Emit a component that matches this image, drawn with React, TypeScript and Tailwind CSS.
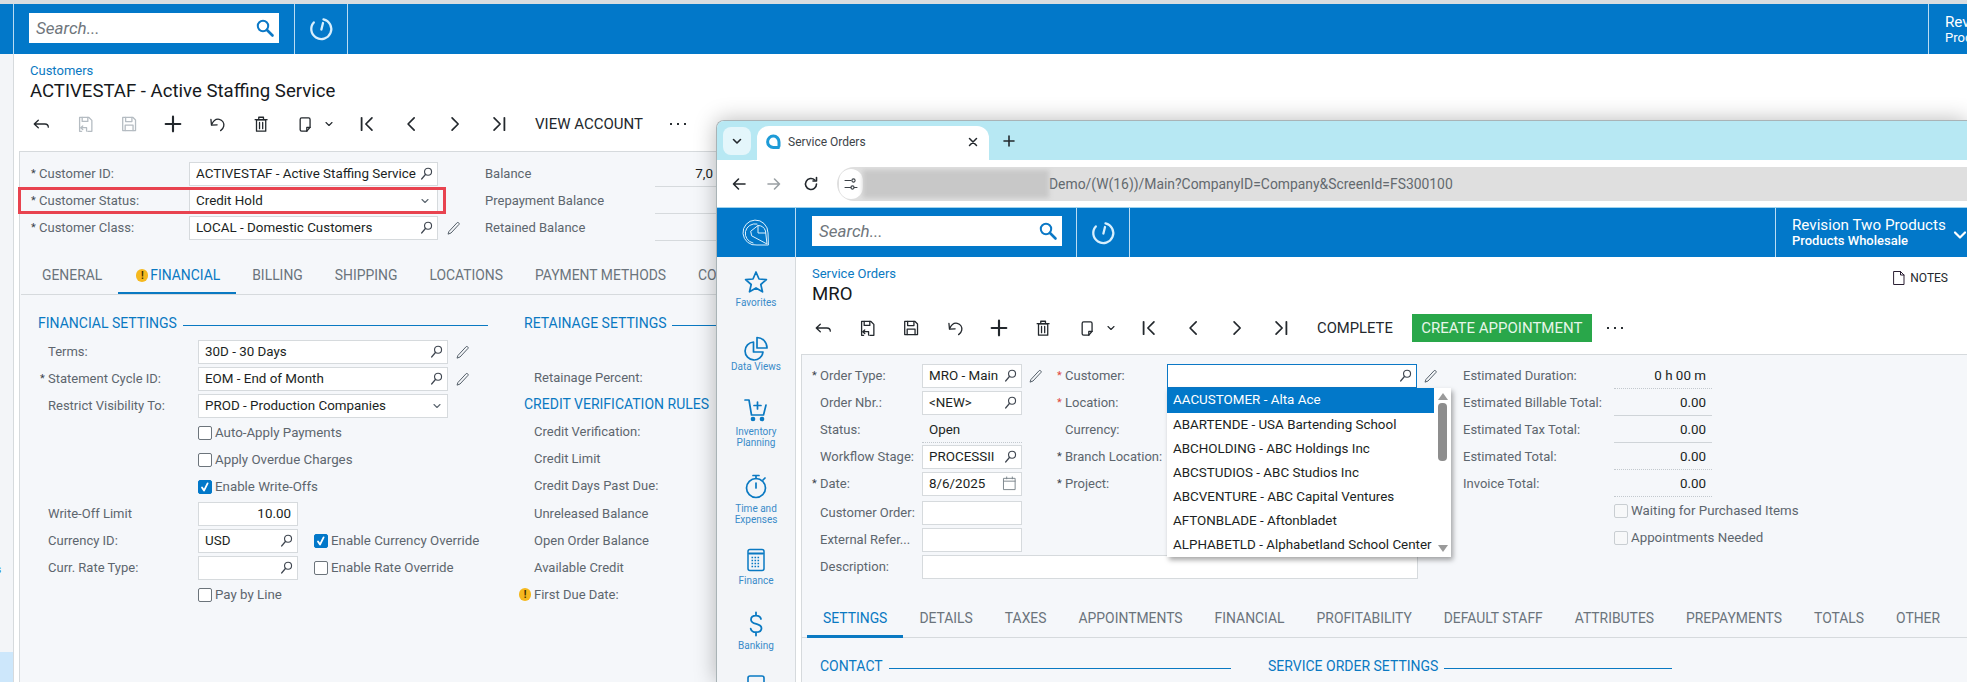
import React from "react";

type C = { children?: React.ReactNode };
const S = ({ w = 16, h = 16, vb = "0 0 16 16", sw = 1.2, color = "currentColor", children, className = "" }: { w?: number; h?: number; vb?: string; sw?: number; color?: string; className?: string } & C) => (
  <svg width={w} height={h} viewBox={vb} fill="none" stroke={color} strokeWidth={sw} strokeLinecap="round" strokeLinejoin="round" className={className}>{children}</svg>
);

const Lens = () => (
  <S w={14} h={14} sw={1.3} color="#3f4650" className="shrink-0"><circle cx="9.2" cy="5.4" r="4" /><path d="M6.3 8.4 2 13.6" strokeWidth="1.7" /></S>
);
const Pencil = () => (
  <S w={16} h={16} sw={1} color="#55606a" className="shrink-0"><path d="M3.2 11.2 11.2 2.6c.8-.7 2.6.8 1.9 1.7L5 13l-2.6 1z" /></S>
);
const Chevron = ({ color = "#5c6670" }: { color?: string }) => (
  <S w={10} h={10} vb="0 0 10 10" sw={1.1} color={color} className="shrink-0"><path d="M2 3.5 5 6.5 8 3.5" /></S>
);
const HeadLens = () => (
  <S w={20} h={20} vb="0 0 20 20" sw={2} color="#0b78c6"><circle cx="8" cy="8" r="5.2" /><path d="m12 12 5.5 5.5" strokeWidth="2.6" /></S>
);
const Timer = () => (
  <S w={28} h={28} vb="0 0 28 28" sw={2.3} color="#d8effd"><path d="M16.5 4.300A10 10 0 1 1 6.800 7.400" /><path d="M14.400 14.500 16 8" /></S>
);
const ToolIcon = ({ name, dim = false, color }: { name: string; dim?: boolean; color?: string }) => {
  const c = color ?? (dim ? "#b5bcc2" : "#23282d");
  const p: Record<string, React.ReactNode> = {
    back: <path d="M2 8h9.5c1.8 0 3 1.1 3 2.8M2 8l3.6-3.4M2 8l3.6 3.4" />,
    saveback: <><path d="M5 14.5H3.2V2.2h8.3l2.6 2.6v9.7h-3.6" /><path d="M5.5 2.2v3.5h5V2.2" /><path d="M4.2 11.3h5.2v3M4.2 11.3l1.8-1.6M4.2 11.3 6 12.9" /></>,
    save: <><path d="M2.4 2.2h9.2l2.2 2.2v9.4H2.4z" /><path d="M5 2.2v3.6h5.6V2.2M4.6 13.8V9h7v4.8" /></>,
    undo: <><path d="M3.300 8.500C4.800 5 7.500 3.300 10 3.800c2.800.6 4.600 3.200 4 6.100-.3 1.700-1.400 3-2.800 4" /><path d="M2.600 3.800 3.100 9l5-.3" /></>,
    plus: <path d="M8 1.5v13M1.5 8h13" strokeWidth={1.9} />,
    trash: <><path d="M4 4.4h8.2v10H4z" /><path d="M2.8 4.2h10.6M6 4V2h4.2v2M6.7 6.6v5.6M9.5 6.6v5.6" /></>,
    paste: <><path d="M5 2.6h6.2c.8 0 1.3.6 1.3 1.3v7L9.6 14.4H5c-.8 0-1.3-.6-1.3-1.3V3.9c0-.7.5-1.3 1.3-1.3z" /><path d="M9.6 14.4V11h2.9" /></>,
    first: <><path d="M3.2 2.5v11" strokeWidth={1.6} /><path d="M12.4 2.5 7 8l5.4 5.5" strokeWidth={1.5} /></>,
    prev: <path d="M10.8 2.5 5.4 8l5.4 5.5" strokeWidth={1.5} />,
    next: <path d="M5.4 2.5 10.8 8l-5.4 5.5" strokeWidth={1.5} />,
    last: <><path d="M12.8 2.5v11" strokeWidth={1.6} /><path d="M3.6 2.5 9 8l-5.4 5.5" strokeWidth={1.5} /></>,
  };
  return <S w={18} h={18} color={c} sw={1.15}>{p[name]}</S>;
};
const Tool = ({ name, dim }: { name: string; dim?: boolean }) => (
  <div className="w-[44px] h-full flex items-center justify-center shrink-0"><ToolIcon name={name} dim={dim} /></div>
);
const Dots = () => (
  <div className="flex gap-[5px] items-center"><i className="w-[2px] h-[2px] bg-[#2a2f33] block" /><i className="w-[2px] h-[2px] bg-[#2a2f33] block" /><i className="w-[2px] h-[2px] bg-[#2a2f33] block" /></div>
);
const Toolbar = ({ dim, undoFirst, children }: { dim?: boolean; undoFirst?: boolean } & C) => (
  <div className="flex items-center h-[34px] -ml-[11px]">
    <Tool name="back" />
    <Tool name="saveback" dim={dim} />
    <Tool name="save" dim={dim} />
    <Tool name={undoFirst ? "undo" : "plus"} />
    <Tool name={undoFirst ? "plus" : "undo"} />
    <Tool name="trash" />
    <div className="w-[62px] h-full flex items-center shrink-0">
      <div className="w-[44px] flex justify-center"><ToolIcon name="paste" /></div>
      <div className="w-[18px] flex justify-start -ml-[3px]"><Chevron color="#23282d" /></div>
    </div>
    <Tool name="first" />
    <Tool name="prev" />
    <Tool name="next" />
    <Tool name="last" />
    {children}
  </div>
);

const Star = ({ red }: { red?: boolean }) => (
  <span className={`w-[8px] -ml-px shrink-0 text-[11px] leading-none ${red ? "text-[#e0483e]" : "text-[#39424a]"}`}>*</span>
);
const Warn = () => (
  <span className="w-[12px] h-[13px] rounded-full bg-[#f5b81e] text-[#3a2c00] text-[10px] leading-[13px] font-bold text-center block">!</span>
);
const Label = ({ w, star, red, warn, children }: { w: string; star?: boolean; red?: boolean; warn?: boolean } & C) => (
  <div className={`${w} shrink-0 flex items-center text-[#5d666e] whitespace-nowrap`}>
    {warn ? <span className="w-[15px] -ml-[8px] flex shrink-0"><Warn /></span> : star ? <Star red={red} /> : <span className="w-[7px] shrink-0" />}
    <span>{children}</span>
  </div>
);
const Box = ({ w, value, icon, right, focus }: { w: string; value?: string; icon?: React.ReactNode; right?: boolean; focus?: boolean }) => (
  <div className={`${w} h-[24px] shrink-0 bg-white border ${focus ? "border-[#0b78c6]" : "border-[#d6dadd]"} flex items-center pl-[6px] pr-[3px] text-[#1b1f23] text-[13.4px]`}>
    <span className={`flex-1 whitespace-nowrap overflow-hidden ${right ? "text-right pr-[3px]" : ""}`}>{value}</span>
    {icon}
  </div>
);
const Check = ({ on, soft }: { on?: boolean; soft?: boolean }) => (
  <span className={`w-[14px] h-[14px] shrink-0 rounded-[2px] border flex items-center justify-center ${on ? "bg-[#0278c9] border-[#0278c9]" : soft ? "bg-[#f7f8f9] border-[#c9ced2]" : "bg-white border-[#6c747b]"}`}>
    {on ? <S w={12} h={12} vb="0 0 12 12" sw={1.8} color="#fff"><path d="M3 6.4 5 9.6 8.6 2.4" /></S> : null}
  </span>
);
const CheckLabel = ({ on, soft, children }: { on?: boolean; soft?: boolean } & C) => (
  <div className="flex items-center gap-[3px] text-[#5d666e] whitespace-nowrap text-[13.3px]"><Check on={on} soft={soft} /><span>{children}</span></div>
);
const Row = ({ children, className = "" }: { className?: string } & C) => (
  <div className={`h-[27px] flex items-center ${className}`}>{children}</div>
);
const Section = ({ title, line }: { title: string; line: string }) => (
  <div className="h-[16px] flex items-center gap-[6px] whitespace-nowrap">
    <span className="text-[#0a79c2] text-[14px] leading-none">{title}</span>
    <span className={`${line} h-px bg-[#0a79c2] mt-[5px] shrink-0`} />
  </div>
);
const Tab = ({ label, active, warn }: { label: string; active?: boolean; warn?: boolean }) => (
  <div className={`h-[37px] shrink-0 flex items-center gap-[2px] pr-4 whitespace-nowrap text-[13.9px] border-b-[3px] ${warn ? "pl-[18px]" : "pl-4"} ${active ? "text-[#0a79c2] border-[#0a79c2]" : "text-[#6b747c] border-transparent"}`}>
    {warn ? <Warn /> : null}
    {label}
  </div>
);

const Search = () => (
  <div className="w-[250px] h-[30px] bg-white flex items-center pl-[7px] pr-[4px]">
    <span className="flex-1 text-[#6f767c] italic text-[17px]">Search...</span>
    <HeadLens />
  </div>
);

const BackPage = () => (
  <div className="h-[682px] flex flex-col bg-white">
    <div className="h-[4px] bg-[#d9dde0] shrink-0" />
    <div className="h-[50px] bg-[#0278c9] flex shrink-0 text-white">
      <div className="w-[14px] border-r border-[#b9dcf3]" />
      <div className="w-[281px] pl-[15px] flex items-start pt-[9px] border-r border-[#b9dcf3]"><Search /></div>
      <div className="w-[53px] flex items-center justify-center border-r border-[#b9dcf3]"><Timer /></div>
      <div className="flex-1 border-r border-[#b9dcf3]" />
      <div className="w-[38px] pl-[16px] overflow-hidden whitespace-nowrap">
        <div className="text-[15.200px] leading-[16px] mt-[10px]">Revision Two Products</div>
        <div className="text-[13px] leading-[15px]">Products Wholesale</div>
      </div>
    </div>
    <div className="flex-1 flex min-h-0">
      <div className="w-[14px] bg-[#f3f5f8] border-r border-[#d6dadd] flex flex-col shrink-0 overflow-hidden">
        <span className="text-[10px] leading-[12px] text-[#0a79c2] -ml-[4px] mt-[510px]">s</span>
        <div className="mt-auto h-[30px] bg-[#cde7fb]" />
      </div>
      <div className="flex-1 flex flex-col min-w-0">
        <div className="pl-[16px] pt-[9px] pb-[10px] shrink-0">
          <div className="text-[13px] leading-[16px] text-[#0a79c2]">Customers</div>
          <div className="text-[18.600px] leading-[22px] mt-px text-[#16191c] whitespace-nowrap">ACTIVESTAF - Active Staffing Service</div>
          <div className="mt-[5px]">
            <Toolbar dim>
              <span className="pl-[14px] text-[15px] text-[#23282d] whitespace-nowrap">VIEW ACCOUNT</span>
              <span className="pl-[27px]"><Dots /></span>
            </Toolbar>
          </div>
        </div>
        <div className="flex-1 ml-[5px] bg-[#f5f7fa] border-l border-t border-[#d6dadd] pl-px">
          <div className="flex pt-[8px] h-[90px]">
            <div className="w-[464px] shrink-0 pl-[11px]">
              <Row><Label w="w-[157px]" star>Customer ID:</Label><Box w="w-[249px]" value="ACTIVESTAF - Active Staffing Service" icon={<Lens />} /></Row>
              <Row className="relative">
                <Label w="w-[157px]" star>Customer Status:</Label>
                <Box w="w-[249px]" value="Credit Hold" icon={<span className="pr-[4px]"><Chevron /></span>} />
                <span className="absolute -left-[14px] top-0 w-[428px] h-[27px] border-[3px] border-[#e8434f]" />
              </Row>
              <Row>
                <Label w="w-[157px]" star>Customer Class:</Label>
                <Box w="w-[249px]" value="LOCAL - Domestic Customers" icon={<Lens />} />
                <span className="pl-[8px]"><Pencil /></span>
              </Row>
            </div>
            <div className="flex-1 whitespace-nowrap text-[#5d666e]">
              {["Balance", "Prepayment Balance", "Retained Balance"].map((t, i) => (
                <Row key={t}>
                  <span className="w-[170px] shrink-0">{t}</span>
                  <span className="w-[120px] h-[24px] border-b border-[#d6dadd] text-right text-[#1b1f23] text-[13.4px] pt-[3px] pr-[62px] mt-[2px]">{i === 0 ? "7,0" : ""}</span>
                </Row>
              ))}
            </div>
          </div>
          <div className="mt-[16px] h-[37px] border-b border-[#d6dadd] flex pl-[5px] overflow-hidden">
            <Tab label="GENERAL" />
            <Tab label="FINANCIAL" active warn />
            <Tab label="BILLING" />
            <Tab label="SHIPPING" />
            <Tab label="LOCATIONS" />
            <Tab label="PAYMENT METHODS" />
            <Tab label="CONTACTS" />
          </div>
          <div className="flex pl-[17px] pt-[20px]">
            <div className="w-[486px] shrink-0">
              <Section title="FINANCIAL SETTINGS" line="w-[305px]" />
              <div className="mt-[7px] pl-[3px]">
                <Row><Label w="w-[157px]">Terms:</Label><Box w="w-[250px]" value="30D - 30 Days" icon={<Lens />} /><span className="pl-[7px]"><Pencil /></span></Row>
                <Row><Label w="w-[157px]" star>Statement Cycle ID:</Label><Box w="w-[250px]" value="EOM - End of Month" icon={<Lens />} /><span className="pl-[7px]"><Pencil /></span></Row>
                <Row><Label w="w-[157px]">Restrict Visibility To:</Label><Box w="w-[250px]" value="PROD - Production Companies" icon={<span className="pr-[2px]"><Chevron /></span>} /></Row>
                <Row className="pl-[157px]"><CheckLabel>Auto-Apply Payments</CheckLabel></Row>
                <Row className="pl-[157px]"><CheckLabel>Apply Overdue Charges</CheckLabel></Row>
                <Row className="pl-[157px]"><CheckLabel on>Enable Write-Offs</CheckLabel></Row>
                <Row><Label w="w-[157px]">Write-Off Limit</Label><Box w="w-[100px]" value="10.00" right /></Row>
                <Row><Label w="w-[157px]">Currency ID:</Label><Box w="w-[100px]" value="USD" icon={<Lens />} /><span className="pl-[16px]"><CheckLabel on>Enable Currency Override</CheckLabel></span></Row>
                <Row><Label w="w-[157px]">Curr. Rate Type:</Label><Box w="w-[100px]" icon={<Lens />} /><span className="pl-[16px]"><CheckLabel>Enable Rate Override</CheckLabel></span></Row>
                <Row className="pl-[157px]"><CheckLabel>Pay by Line</CheckLabel></Row>
              </div>
            </div>
            <div className="flex-1 min-w-0 text-[#5d666e] whitespace-nowrap">
              <Section title="RETAINAGE SETTINGS" line="w-[60px]" />
              <div className="mt-[6px] pl-[3px]">
                <Row />
                <Row><Label w="w-[160px]">Retainage Percent:</Label></Row>
                <div className="h-[27px] -ml-[3px] flex items-center text-[#0a79c2] text-[14px] pb-[2px]">CREDIT VERIFICATION RULES</div>
                <Row><Label w="w-[160px]">Credit Verification:</Label></Row>
                <Row><Label w="w-[160px]">Credit Limit</Label></Row>
                <Row><Label w="w-[160px]">Credit Days Past Due:</Label></Row>
                <div className="mt-px">
                  <Row><Label w="w-[160px]">Unreleased Balance</Label></Row>
                  <Row><Label w="w-[160px]">Open Order Balance</Label></Row>
                  <Row><Label w="w-[160px]">Available Credit</Label></Row>
                  <Row><Label w="w-[160px]" warn>First Due Date:</Label></Row>
                </div>
              </div>
            </div>
          </div>
        </div>
      </div>
    </div>
  </div>
);

const Nav = ({ mt, lmt = "", lines, children }: { mt: string; lmt?: string; lines: string[] } & C) => (
  <div className={`${mt} flex flex-col items-center shrink-0`}>
    <div className="h-[28px] flex items-center justify-center">{children}</div>
    <div className={`${lmt} text-[10px] leading-[11px] text-[#3a8bc9] text-center whitespace-nowrap`}>
      {lines.map((l) => <div key={l}>{l}</div>)}
    </div>
  </div>
);
const B = "#0a79c2";

const Sidebar = () => (
  <div className="w-[79px] shrink-0 bg-[#f3f5f8] border-r border-[#d6dadd] flex flex-col overflow-hidden">
    <Nav mt="mt-[11px]" lmt="mt-px" lines={["Favorites"]}>
      <S w={26} h={26} vb="0 0 26 26" sw={1.7} color={B}><path d="m13 3 3 7 7.4.6-5.6 4.9 1.7 7.3-6.5-3.9-6.5 3.9 1.7-7.3-5.6-4.9L10 10z" /></S>
    </Nav>
    <Nav mt="mt-[26px]" lmt="-mt-px" lines={["Data Views"]}>
      <S w={26} h={26} vb="0 0 26 26" sw={1.7} color={B}><path d="M10.5 7A9 9 0 1 0 20 17h-9.5z" /><path d="M14 2.5V13h10c0-6-4.5-10.5-10-10.5z" /></S>
    </Nav>
    <Nav mt="mt-[24px]" lmt="mt-[2px]" lines={["Inventory", "Planning"]}>
      <S w={26} h={26} vb="0 0 26 26" sw={1.7} color={B}><path d="M2 3h4l2.5 15h12L23 8" /><path d="M14.5 5v7M11 8.5h7" /><circle cx="10" cy="22" r="1.5" fill={B} /><circle cx="19" cy="22" r="1.5" fill={B} /></S>
    </Nav>
    <Nav mt="mt-[24px]" lmt="mt-[3px]" lines={["Time and", "Expenses"]}>
      <S w={26} h={26} vb="0 0 26 26" sw={1.7} color={B}><circle cx="13" cy="15" r="9.5" /><path d="M10 2.5h6M13 2.5v3M20 7l2-2M13 10v5" /></S>
    </Nav>
    <Nav mt="mt-[21px]" lmt="mt-[1px]" lines={["Finance"]}>
      <S w={26} h={26} vb="0 0 26 26" sw={1.5} color={B}>
        <rect x="5" y="2.5" width="16" height="21" rx="2" />
        <path d="M6 6.5h14" strokeWidth="2" />
        <path d="M8.5 10.5h9M8.5 13.5h9M8.5 16.5h9M8.5 19.5h9" strokeWidth="1.6" strokeDasharray="1.6 1.4" strokeLinecap="butt" />
      </S>
    </Nav>
    <Nav mt="mt-[24px]" lmt="mt-[2px]" lines={["Banking"]}>
      <S w={26} h={26} vb="0 0 26 26" sw={1.8} color={B}><path d="M18 8c-.5-2-2.5-3.3-5-3.3-3 0-5 1.6-5 4 0 5.5 10.500 3 10.500 8.500 0 2.500-2.300 4-5.500 4-2.700 0-4.700-1.300-5.300-3.500M13 1.500v3M13 21.500v3" /></S>
    </Nav>
    <div className="mt-[24px] flex justify-center shrink-0">
      <S w={26} h={26} vb="0 0 26 26" sw={1.6} color={B}><rect x="5" y="1" width="16" height="20" rx="2" /></S>
    </div>
  </div>
);

const options = ["AACUSTOMER - Alta Ace", "ABARTENDE - USA Bartending School", "ABCHOLDING - ABC Holdings Inc", "ABCSTUDIOS - ABC Studios Inc", "ABCVENTURE - ABC Capital Ventures", "AFTONBLADE - Aftonbladet", "ALPHABETLD - Alphabetland School Center"];

const Dropdown = () => (
  <div className="absolute left-0 top-[24px] z-10 w-[284px] h-[169px] bg-white shadow-[2px_3px_5px_rgba(0,0,0,0.35)] flex text-[13.400px]">
    <div className="w-[267px]">
      {options.map((o, i) => (
        <div key={o} className={`flex items-center pl-[6px] whitespace-nowrap ${i === 0 ? "bg-[#0278c9] text-white h-[25px]" : "text-[#1b1f23] h-[24px]"}`}>{o}</div>
      ))}
    </div>
    <div className="flex-1 flex flex-col items-center pt-[5px] pb-[5px]">
      <span className="w-0 h-0 border-l-[5px] border-r-[5px] border-b-[7px] border-l-transparent border-r-transparent border-b-[#9a9a9a]" />
      <span className="w-[9px] h-[58px] mt-[3px] rounded-[4px] bg-[#8d8d8d]" />
      <span className="mt-auto w-0 h-0 border-l-[5px] border-r-[5px] border-t-[7px] border-l-transparent border-r-transparent border-t-[#9a9a9a]" />
    </div>
  </div>
);

const Totals = ({ label, value, solid }: { label: string; value: string; solid?: boolean }) => (
  <Row>
    <span className="w-[151px] shrink-0 text-[#5d666e] whitespace-nowrap">{label}</span>
    <span className={`w-[98px] h-[24px] mt-[3px] pt-[3px] pr-[6px] text-right text-[#1b1f23] text-[13.400px] border-b ${solid ? "border-[#cfd4d8]" : "border-dotted border-[#c3c9ce]"}`}>{value}</span>
  </Row>
);

const Browser = () => (
  <div className="absolute left-[716px] top-[120px] right-0 bottom-0 flex flex-col rounded-tl-lg overflow-hidden border-l border-t border-[#a9b3b6] shadow-[0_0_22px_rgba(0,0,0,0.28)] bg-white">
    <div className="h-[39px] shrink-0 bg-[#b7e8f3] flex items-end pl-[6px] pr-[6px]">
      <div className="w-[28px] h-[28px] mb-[5px] bg-[#e4f6fb] rounded-lg flex items-center justify-center">
        <S w={12} h={12} vb="0 0 12 12" sw={1.6} color="#23282d"><path d="M2.500 4.500 6 8l3.500-3.500" /></S>
      </div>
      <div className="ml-[6px] w-[232px] h-[34px] bg-white rounded-t-xl flex items-center pl-[9px] pr-[10px] pb-[3px]">
        <S w={15} h={16} vb="0 0 15 16" sw={3} color="#1e9bd7"><path d="M12.500 13.500 H7.500 A5.700 5.700 0 1 1 13 8 v4" /></S>
        <span className="flex-1 pl-[7px] text-[12px] text-[#3d4348] whitespace-nowrap">Service Orders</span>
        <S w={12} h={12} vb="0 0 12 12" sw={1.5} color="#23282d"><path d="m2.500 2.500 7 7M9.500 2.500l-7 7" /></S>
      </div>
      <div className="ml-[13px] mb-[8px] h-[22px] flex items-center">
        <S w={14} h={14} vb="0 0 14 14" sw={1.6} color="#23282d"><path d="M7 2v10M2 7h10" /></S>
      </div>
    </div>
    <div className="h-[47px] shrink-0 bg-white flex items-center pl-[14px]">
      <S w={16} h={16} sw={1.6} color="#23282d"><path d="M14 8H2.500M7.500 3 2.500 8l5 5" /></S>
      <span className="ml-[19px]"><S w={16} h={16} sw={1.6} color="#9aa0a4"><path d="M2 8h11.500M8.500 3l5 5-5 5" /></S></span>
      <span className="ml-[21px]"><S w={16} h={16} sw={1.6} color="#23282d"><path d="M13.500 8a5.500 5.500 0 1 1-1.700-4" /><path d="M13.500 1.500v3.500H10" /></S></span>
      <div className="ml-[18px] flex-1 h-[34px] bg-[#dfdfdf] rounded-l-full flex items-center pl-[2px] overflow-hidden">
        <span className="w-[24px] h-[30px] bg-white rounded-full flex items-center justify-center shrink-0">
          <S w={14} h={14} vb="0 0 14 14" sw={1.1} color="#3d4348"><path d="M1 3.500h6M1 10.500h6M10 10.500h3" /><circle cx="9.500" cy="3.500" r="1.600" /><circle cx="8.500" cy="10.500" r="1.600" /></S>
        </span>
        <span className="w-[186px] h-[28px] shrink-0 bg-[#c8c8c8] blur-[2px]" />
        <span className="text-[13.900px] text-[#63696e] whitespace-nowrap">Demo/(W(16))/Main?CompanyID=Company&amp;ScreenId=FS300100</span>
      </div>
    </div>
    <div className="h-[50px] shrink-0 bg-[#0278c9] border-t border-[#9fd3ee] flex text-white">
      <div className="w-[79px] flex items-center justify-center border-r border-[#b9dcf3]">
        <S w={28} h={30} vb="0 0 28 30" sw={1} color="#dff1fc"><path d="M26 27H15A12.500 12.500 0 1 1 26 14.500z" /><path d="M11 25A9.500 9.500 0 0 1 15 6" /><path d="M9 13 16 7.500A8 8 0 0 1 23.500 13L25 26 10 18z" /><path d="M16 7.500V15h7.500" /></S>
      </div>
      <div className="w-[281px] pl-[16px] pt-[8px] border-r border-[#b9dcf3]"><Search /></div>
      <div className="w-[53px] flex items-center justify-center border-r border-[#b9dcf3]"><Timer /></div>
      <div className="flex-1 border-r border-[#b9dcf3]" />
      <div className="w-[191px] pl-[16px] flex items-center">
        <div className="whitespace-nowrap">
          <div className="text-[15.200px] leading-[16px]">Revision Two Products</div>
          <div className="text-[13px] leading-[15px] font-medium">Products Wholesale</div>
        </div>
        <span className="ml-[7px] mt-[4px]"><S w={14} h={14} vb="0 0 14 14" sw={2.2} color="#fff"><path d="m2 4.500 5 5 5-5" /></S></span>
      </div>
    </div>
    <div className="flex-1 flex min-h-0">
      <Sidebar />
      <div className="flex-1 flex flex-col min-w-0">
        <div className="pl-[16px] pt-[9px] pb-[9px] shrink-0">
          <div className="flex items-center justify-between pr-[19px] h-[16px]">
            <span className="text-[13px] text-[#0a79c2]">Service Orders</span>
            <span className="flex items-center gap-[4px] text-[12px] text-[#23282d] mt-[8px]">
              <S w={14} h={16} vb="0 0 14 16" sw={1} color="#2a1f33"><path d="M2 1.500h6.500L12 5v9.500H2zM8.500 1.500V5H12" /></S>NOTES
            </span>
          </div>
          <div className="text-[18.600px] leading-[22px] mt-px text-[#16191c]">MRO</div>
          <div className="mt-[6px]">
            <Toolbar undoFirst>
              <span className="pl-[14px] text-[14.800px] text-[#23282d]">COMPLETE</span>
              <span className="ml-[19px] w-[180px] h-[28px] bg-[#29a74a] text-[#e6f6e9] text-[15px] flex items-center justify-center whitespace-nowrap">CREATE APPOINTMENT</span>
              <span className="pl-[15px]"><Dots /></span>
            </Toolbar>
          </div>
        </div>
        <div className="flex-1 ml-[5px] bg-[#f5f7fa] border-l border-t border-[#d6dadd]">
          <div className="flex pt-[7px]">
            <div className="w-[661px] shrink-0">
              <div className="flex">
                <div className="w-[256px] shrink-0 pl-[11px]">
                  <Row><Label w="w-[109px]" star>Order Type:</Label><Box w="w-[100px]" value="MRO - Main" icon={<Lens />} /><span className="pl-[6px]"><Pencil /></span></Row>
                  <Row><Label w="w-[109px]">Order Nbr.:</Label><Box w="w-[100px]" value=" <NEW>" icon={<Lens />} /></Row>
                  <Row>
                    <Label w="w-[109px]">Status:</Label>
                    <span className="w-[100px] h-[24px] mt-[2px] pl-[7px] pt-[3px] border-b border-dotted border-[#c3c9ce] text-[#1b1f23] text-[13.400px]">Open</span>
                  </Row>
                  <Row><Label w="w-[109px]">Workflow Stage:</Label><Box w="w-[100px]" value="PROCESSII" icon={<Lens />} /></Row>
                  <Row>
                    <Label w="w-[109px]" star>Date:</Label>
                    <Box w="w-[100px]" value="8/6/2025" icon={<S w={15} h={15} sw={1} color="#7a838a" className="shrink-0 mr-[1px]"><path d="M2 2.500h12v12H2zM2 5.500h12M5 1v2M11 1v2" /></S>} />
                  </Row>
                  <div className="mt-[2px]">
                    <Row><Label w="w-[109px]">Customer Order:</Label><Box w="w-[100px]" /></Row>
                    <Row><Label w="w-[109px]">External Refer...</Label><Box w="w-[100px]" /></Row>
                  </div>
                </div>
                <div className="flex-1">
                  <Row>
                    <Label w="w-[109px]" star red>Customer:</Label>
                    <div className="relative">
                      <Box w="w-[250px]" focus icon={<Lens />} />
                      <Dropdown />
                    </div>
                    <span className="pl-[6px]"><Pencil /></span>
                  </Row>
                  <Row><Label w="w-[109px]" star red>Location:</Label></Row>
                  <Row><Label w="w-[109px]">Currency:</Label></Row>
                  <Row><Label w="w-[109px]" star>Branch Location:</Label></Row>
                  <Row><Label w="w-[109px]" star>Project:</Label></Row>
                </div>
              </div>
              <Row className="pl-[11px]"><Label w="w-[109px]">Description:</Label><Box w="w-[496px]" /></Row>
            </div>
            <div className="flex-1">
              <Totals label="Estimated Duration:" value="0 h 00 m" />
              <Totals label="Estimated Billable Total:" value="0.00" solid />
              <Totals label="Estimated Tax Total:" value="0.00" solid />
              <Totals label="Estimated Total:" value="0.00" />
              <Totals label="Invoice Total:" value="0.00" />
              <div className="pl-[151px]">
                <Row><CheckLabel soft>Waiting for Purchased Items</CheckLabel></Row>
                <Row><CheckLabel soft>Appointments Needed</CheckLabel></Row>
              </div>
            </div>
          </div>
          <div className="mt-[21px] h-[37px] border-b border-[#d6dadd] flex pl-[5px]">
            <Tab label="SETTINGS" active />
            <Tab label="DETAILS" />
            <Tab label="TAXES" />
            <Tab label="APPOINTMENTS" />
            <Tab label="FINANCIAL" />
            <Tab label="PROFITABILITY" />
            <Tab label="DEFAULT STAFF" />
            <Tab label="ATTRIBUTES" />
            <Tab label="PREPAYMENTS" />
            <Tab label="TOTALS" />
            <Tab label="OTHER" />
          </div>
          <div className="flex pl-[18px] pt-[20px]">
            <div className="w-[448px] shrink-0"><Section title="CONTACT" line="w-[342px]" /></div>
            <Section title="SERVICE ORDER SETTINGS" line="w-[228px]" />
          </div>
        </div>
      </div>
    </div>
  </div>
);

export default function App() {
  return (
    <div className="relative w-[1967px] h-[682px] overflow-hidden bg-white text-[13px] leading-[16px] [font-family:Roboto,sans-serif]">
      <BackPage />
      <Browser />
    </div>
  );
}
